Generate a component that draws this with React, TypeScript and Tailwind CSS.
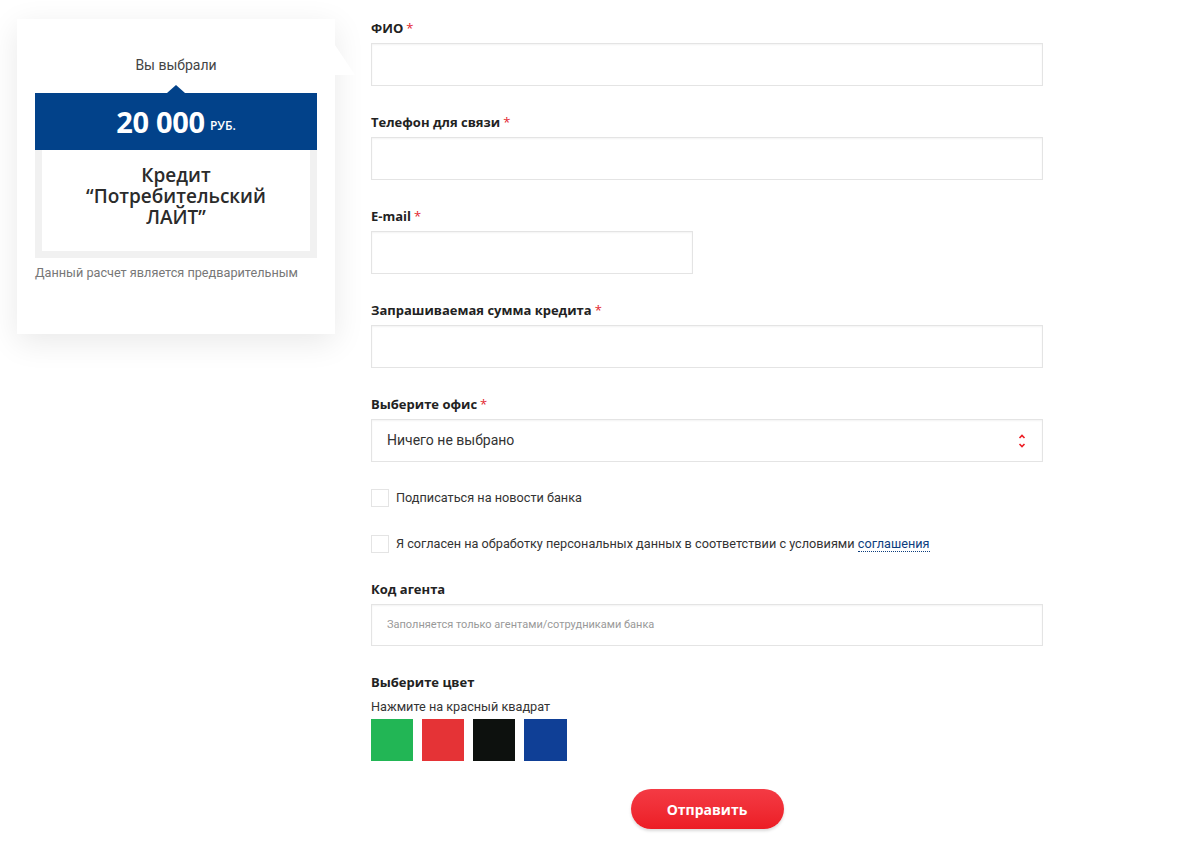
import React from "react";

function Label({ children, required }: { children: React.ReactNode; required?: boolean }) {
  return (
    <div className="h-[18px] leading-[18px] mb-[6px] text-[13px] font-bold text-[#222] [font-family:'Open_Sans',sans-serif]">
      {children}
      {required && <span className="text-[#e3262f] font-normal ml-[3px]">*</span>}
    </div>
  );
}

function Input({ w = "w-[672px]", h = "h-[43px]", children }: { w?: string; h?: string; children?: React.ReactNode }) {
  return (
    <div className={`${w} ${h} border border-[#e4e4e4] bg-white shadow-[inset_0_1px_2px_rgba(0,0,0,0.05)] flex items-center px-[15px]`}>
      {children}
    </div>
  );
}

function Checkbox({ children }: { children: React.ReactNode }) {
  return (
    <div className="flex items-center h-[18px]">
      <div className="w-[18px] h-[18px] border border-[#e4e4e4] bg-white" />
      <div className="ml-[7px] text-[12.7px] text-[#333] [font-family:Roboto,sans-serif]">{children}</div>
    </div>
  );
}

export default function App() {
  return (
    <div className="w-[1191px] h-[850px] bg-white flex items-start pl-[17px] pt-[19px] [font-family:Roboto,sans-serif]">
      {/* Card */}
      <div className="relative w-[318px] h-[315px] bg-white shadow-[0_8px_30px_rgba(0,0,0,0.09)] px-[18px] pt-[36px]">
        <div className="absolute right-[-20px] top-[26px] w-[20px] h-[30px] bg-white [clip-path:polygon(0_0,100%_100%,0_100%)]" />
        <div className="text-center text-[14px] leading-[20px] text-[#444]">Вы выбрали</div>
        <div className="relative mt-[18px] h-[57px] bg-[#02428a] flex items-center justify-center">
          <div className="absolute left-1/2 top-[-8px] -translate-x-1/2 w-0 h-0 border-l-[9px] border-r-[9px] border-b-[8px] border-l-transparent border-r-transparent border-b-[#02428a]" />
          <span className="text-white text-[29px] font-bold leading-none [font-family:'Open_Sans',sans-serif] tracking-[-0.3px]">20 000</span>
          <span className="text-white text-[12px] font-semibold ml-[5px] mt-[8px] [font-family:'Open_Sans',sans-serif]">РУБ.</span>
        </div>
        <div className="bg-[#f1f1f1] px-[7px] pb-[7px]">
          <div className="bg-white h-[101px] flex items-center justify-center text-center text-[19px] leading-[21px] font-semibold text-[#2b2b2b] [font-family:'Open_Sans',sans-serif] px-[30px] pb-[8px]">
            Кредит “Потребительский ЛАЙТ”
          </div>
        </div>
        <div className="mt-[7px] text-[12.7px] leading-[16px] text-[#777]">Данный расчет является предварительным</div>
      </div>

      {/* Form */}
      <div className="ml-[36px] w-[672px] flex flex-col">
        <Label required>ФИО</Label>
        <Input />
        <div className="h-[27px]" />
        <Label required>Телефон для связи</Label>
        <Input />
        <div className="h-[27px]" />
        <Label required>E-mail</Label>
        <Input w="w-[322px]" />
        <div className="h-[27px]" />
        <Label required>Запрашиваемая сумма кредита</Label>
        <Input />
        <div className="h-[27px]" />
        <Label required>Выберите офис</Label>
        <Input>
          <span className="text-[14px] text-[#333]">Ничего не выбрано</span>
          <svg className="ml-auto mr-[1px]" width="8" height="16" viewBox="0 0 8 16" fill="none" stroke="#ed1c24" strokeWidth="1.6">
            <path d="M1.5 5 L4 2.5 L6.5 5" />
            <path d="M1.5 11 L4 13.5 L6.5 11" />
          </svg>
        </Input>
        <div className="h-[27px]" />
        <Checkbox>Подписаться на новости банка</Checkbox>
        <div className="h-[28px]" />
        <Checkbox>
          Я согласен на обработку персональных данных в соответствии с условиями{" "}
          <span className="text-[#0c3d7d] border-b border-dotted border-[#0c3d7d]">соглашения</span>
        </Checkbox>
        <div className="h-[27px]" />
        <Label>Код агента</Label>
        <Input h="h-[42px]">
          <span className="text-[11px] text-[#999]">Заполняется только агентами/сотрудниками банка</span>
        </Input>
        <div className="h-[27px]" />
        <Label>Выберите цвет</Label>
        <div className="text-[12.7px] leading-[14px] text-[#333] mt-[3px]">Нажмите на красный квадрат</div>
        <div className="flex gap-[9px] mt-[5px]">
          <div className="w-[42px] h-[42px] bg-[#22b655]" />
          <div className="w-[42px] h-[42px] bg-[#e53336]" />
          <div className="w-[42px] h-[42px] bg-[#0d110e]" />
          <div className="w-[43px] h-[42px] bg-[#0f3f96]" />
        </div>
        <div className="flex justify-center mt-[28px]">
          <button className="w-[153px] h-[40px] rounded-full bg-gradient-to-b from-[#f43a44] to-[#ec1c24] text-white text-[14px] font-bold [font-family:'Open_Sans',sans-serif] shadow-[0_2px_3px_rgba(0,0,0,0.15)]">
            Отправить
          </button>
        </div>
      </div>
    </div>
  );
}
